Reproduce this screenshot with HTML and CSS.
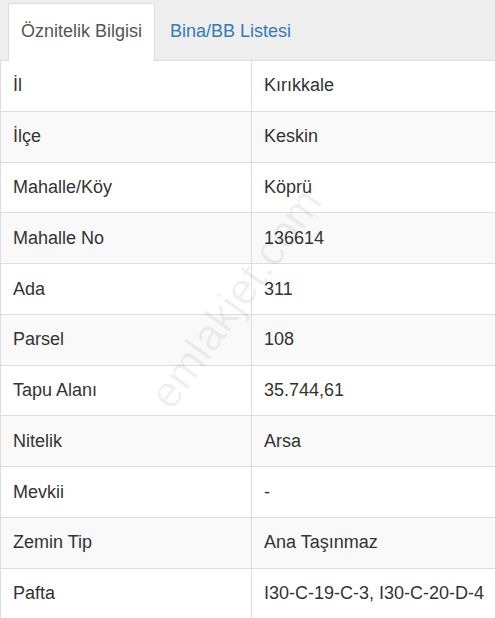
FILE: index.html
```html
<!DOCTYPE html>
<html lang="tr">
<head>
    <meta charset="UTF-8">
    <meta name="viewport" content="width=device-width, initial-scale=1.0">
    <title>Parsel Bilgisi</title>
    <link rel="stylesheet" href="styles.css">
</head>
<body>
    <ul class="nav-tabs">
        <li class="tab active"><a href="#oznitelik">Öznitelik Bilgisi</a></li>
        <li class="tab"><a href="#bina">Bina/BB Listesi</a></li>
    </ul>

    <div class="tab-content">
        <table class="info-table">
            <tbody>
                <tr><td class="label">İl</td><td>Kırıkkale</td></tr>
                <tr><td class="label">İlçe</td><td>Keskin</td></tr>
                <tr><td class="label">Mahalle/Köy</td><td>Köprü</td></tr>
                <tr><td class="label">Mahalle No</td><td>136614</td></tr>
                <tr><td class="label">Ada</td><td>311</td></tr>
                <tr><td class="label">Parsel</td><td>108</td></tr>
                <tr><td class="label">Tapu Alanı</td><td>35.744,61</td></tr>
                <tr><td class="label">Nitelik</td><td>Arsa</td></tr>
                <tr><td class="label">Mevkii</td><td>-</td></tr>
                <tr><td class="label">Zemin Tip</td><td>Ana Taşınmaz</td></tr>
                <tr><td class="label">Pafta</td><td>I30-C-19-C-3, I30-C-20-D-4</td></tr>
            </tbody>
        </table>
        <div class="watermark">emlakjet.com</div>
    </div>
</body>
</html>
```

FILE: styles.css
```css
body {
    font-family: "Liberation Sans", Arial, sans-serif;
    font-size: 18px;
    color: #333;
    margin: 0;
    padding: 0;
    background-color: #fff;
    overflow: hidden;
}
.nav-tabs {
    display: flex;
    list-style: none;
    margin: 0;
    padding: 3px 0 0 8px;
    background-color: #eee;
    border-bottom: 1px solid #ddd;
}
.tab {
    margin-right: 2px;
    margin-bottom: -1px;
}
.tab a {
    display: block;
    padding: 17px 12px 18px;
    line-height: 21px;
    border: 1px solid transparent;
    border-bottom: none;
    color: #337ab7;
    text-decoration: none;
}
.tab.active a {
    background-color: #fff;
    border-color: #ddd;
    color: #555;
    padding-bottom: 19px;
}
.tab-content {
    position: relative;
    overflow: hidden;
}
.info-table {
    width: 640px;
    border-collapse: collapse;
    border-left: 1px solid #ddd;
}
.info-table td {
    padding: 14.4px 12px;
    line-height: 21px;
    border-top: 1px solid #ddd;
    border-right: 1px solid #ddd;
    text-align: left;
}
.info-table td.label {
    width: 226px;
}
.info-table tr:nth-child(even) {
    background-color: #f9f9f9;
}
.info-table tr:first-child td {
    border-top: none;
}
.watermark {
    position: absolute;
    left: 106px;
    top: 212px;
    font-size: 44px;
    color: rgba(0, 0, 0, 0.06);
    transform: rotate(-54deg);
    pointer-events: none;
    white-space: nowrap;
}
```
